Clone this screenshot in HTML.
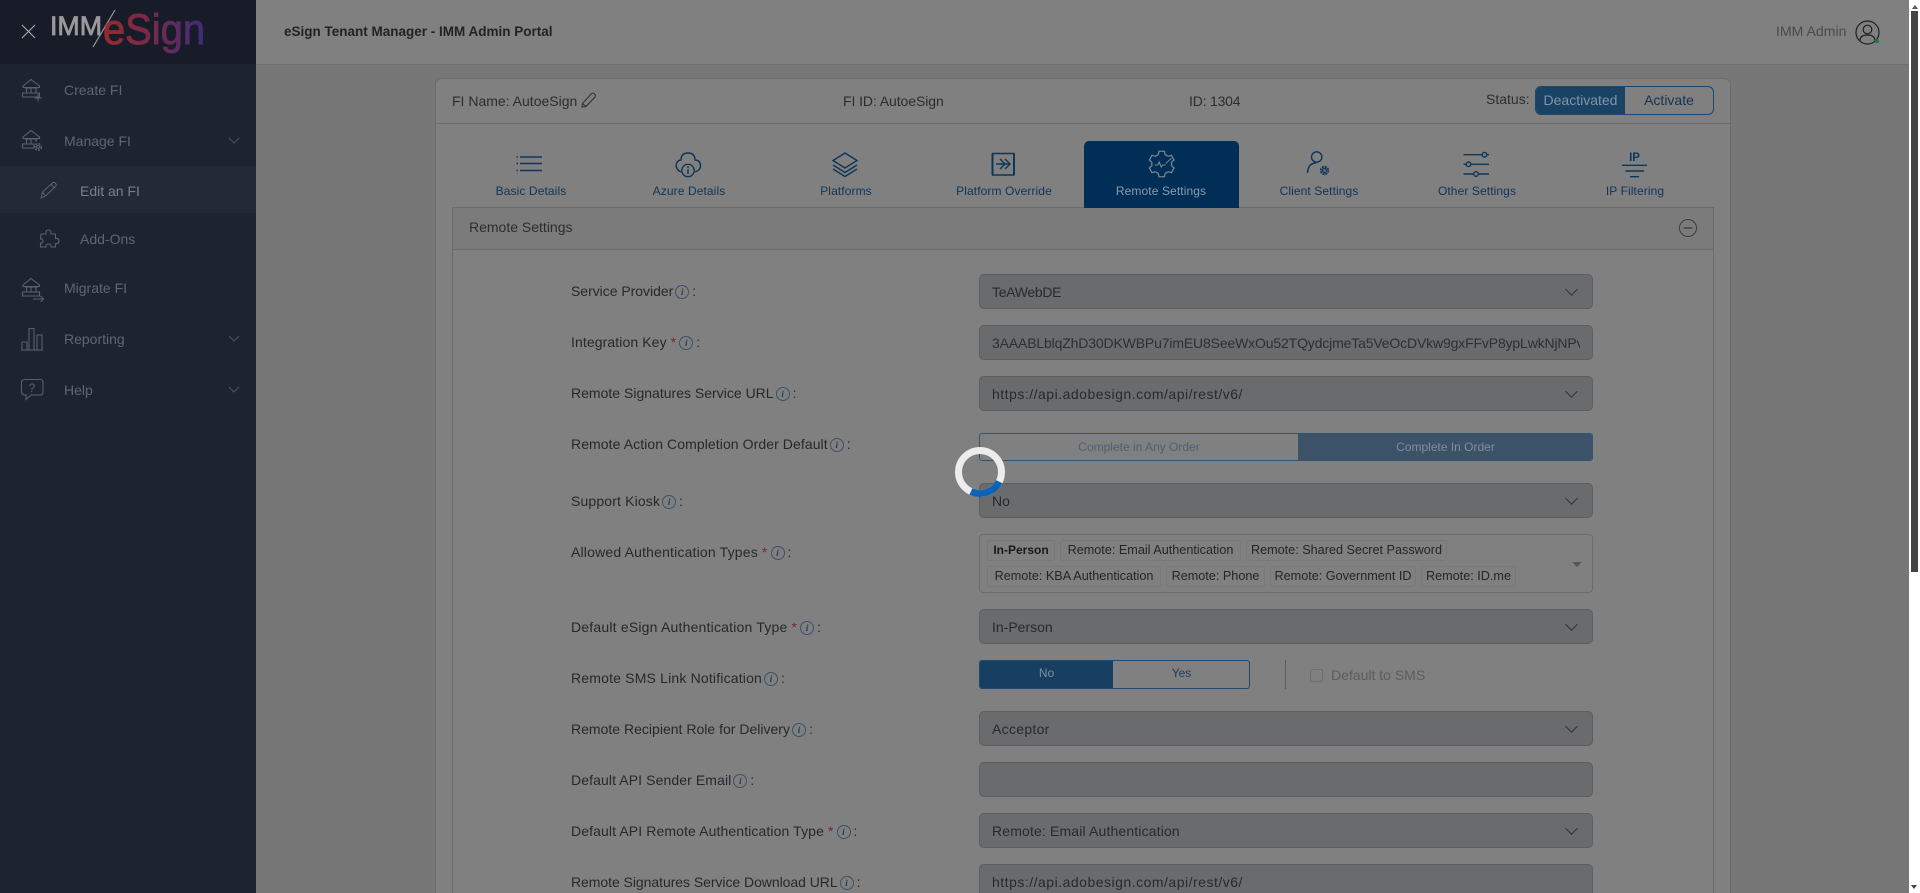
<!DOCTYPE html>
<html><head><meta charset="utf-8"><title>eSign Tenant Manager</title>
<style>
*{box-sizing:border-box}
html,body{margin:0;padding:0;width:1920px;height:893px;overflow:hidden;background:#777;font-family:"Liberation Sans",sans-serif;font-size:14px;color:#26282b}
#root{position:relative;width:1920px;height:893px;overflow:hidden}
.a{position:absolute;white-space:nowrap}
svg{position:absolute;overflow:visible}
.n{position:absolute;left:64px;color:#5f6670;line-height:20px;white-space:nowrap}
.l{position:absolute;left:571px;height:20px;line-height:20px;white-space:nowrap;color:#26282b}
.l b{color:#7a2a2a;font-weight:400;margin:0 1px 0 4px}
.inf{display:inline-block;width:14px;height:14px;border:1px solid #39526b;border-radius:50%;font:italic bold 9px/12px "Liberation Serif",serif;text-align:center;color:#26394d;margin:0 3px 0 2px;vertical-align:1px;letter-spacing:0}
.s{position:absolute;left:979px;width:614px;height:35px;background:#6a6b6d;border:1px solid #5b5e63;border-radius:5px;padding-left:12px;line-height:34px;color:#27292c;white-space:nowrap;overflow:hidden}
.c::after{content:"";position:absolute;right:16px;top:10px;width:8px;height:8px;border-right:1.300px solid #303338;border-bottom:1.300px solid #303338;transform:rotate(45deg)}
.t{position:absolute;top:183px;width:158px;text-align:center;font-size:12px;line-height:16px;color:#0e3456;letter-spacing:.1px}
.g{position:absolute;height:21px;border:1px solid #77787a;border-radius:3px;font-size:12.650px;line-height:18px;text-align:center;color:#232528;white-space:nowrap}
</style></head><body><div id="root">
<!-- sidebar -->
<div class="a" style="left:0;top:0;width:256px;height:893px;background:#1d2431"></div>
<div class="a" style="left:0;top:0;width:256px;height:64px;background:#171c28"></div>
<div class="a" style="left:0;top:166px;width:256px;height:47px;background:#232a36"></div>
<svg style="left:0;top:0" width="256" height="64">
<defs><linearGradient id="lg" gradientUnits="userSpaceOnUse" x1="103" y1="0" x2="205" y2="0"><stop offset="0" stop-color="#962a2e"/><stop offset=".5" stop-color="#74294e"/><stop offset="1" stop-color="#3e2d78"/></linearGradient></defs>
<path d="M22 25L35 38M35 25L22 38" stroke="#a8aaad" stroke-width="1.100" fill="none"/>
<text x="50" y="35" font-family="Liberation Sans" font-size="27" fill="#9a9a9a" stroke="#9a9a9a" stroke-width=".8" textLength="52" lengthAdjust="spacingAndGlyphs">IMM</text>
<path d="M115 10L93 47" stroke="#9a9a9a" stroke-width="1.200"/>
<text x="103" y="44" font-family="Liberation Sans" font-size="43" fill="url(#lg)" stroke="url(#lg)" stroke-width=".9" textLength="102" lengthAdjust="spacingAndGlyphs">eSign</text>
</svg>
<svg style="left:0;top:64px" width="256" height="350" fill="none" stroke="#5a616b" stroke-width="1.100">
<path d="M23 22L31 15.500L39.500 22V23.500H23ZM25 24H38M26.500 24V29M31 24V29M36 24V29M22.500 29H39.500V33H22.500Z"/><path d="M38 30V37.500M34.500 34H42"/>
<g transform="translate(0,51)"><path d="M23 22L31 15.500L39.500 22V23.500H23ZM25 24H38M26.500 24V29M31 24V29M36 24V27M22.500 29H34V33H22.500Z"/><circle cx="38" cy="32" r="1.500"/><circle cx="38" cy="32" r="3.300" stroke-dasharray="2 1.200" stroke-width="1.500"/></g>
<g transform="translate(0,199)"><path d="M23 22L31 15.500L39.500 22V23.500H23ZM25 24H38M26.500 24V29M31 24V29M36 24V29M22.500 29H39.500V33H22.500Z"/><path d="M33 36H43.500M40.500 33L43.500 36L40.500 39"/></g>
<path d="M21 286H43M22 285.500V278H27V285.500M29 285.500V264.500H34V285.500M37 285.500V271H42V285.500"/>
<path d="M25 315.500H40Q43 315.500 43 318.500V328Q43 331 40 331H31L26 335.500V331H25Q21.500 331 21.500 328V318.500Q21.500 315.500 25 315.500Z"/>
<text x="32" y="328" font-family="Liberation Sans" font-size="12" fill="#5a616b" stroke="none" text-anchor="middle">?</text>
<path d="M229 74L234 79L239 74M229 272L234 277L239 272M229 323L234 328L239 323" stroke="#4a515c"/>
<path d="M41 134L42.500 128L52.500 118.800Q54 117.800 55.500 119.300Q57 120.800 55.500 122.500L45.500 132ZM42.500 128L45.500 132M51 120.500L54 123.500" stroke="#5f666f" stroke-width=".9"/>
<path d="M41 170H46Q45.500 166 48.500 166Q51.500 166 51 170H55.500V174.500Q59 174 59 177Q59 180 55.500 179.500V183H51Q51.500 180 48.500 180Q45.500 180 46 183H40.500V179Q43 179.500 43 177Q43 174.500 40.500 175Z" stroke="#5a616b"/>
</svg>
<div class="n" style="top:80px">Create FI</div>
<div class="n" style="top:131px">Manage FI</div>
<div class="n" style="left:80px;top:181px;color:#7b8089">Edit an FI</div>
<div class="n" style="left:80px;top:229px">Add-Ons</div>
<div class="n" style="top:278px">Migrate FI</div>
<div class="n" style="top:329px">Reporting</div>
<div class="n" style="top:380px">Help</div>
<!-- header -->
<div class="a" style="left:256px;top:0;width:1653px;height:65px;background:#808080;border-bottom:1px solid #6f6f6f"></div>
<div class="a" style="left:284px;top:23px;font-weight:700;font-size:13.500px;line-height:18px;color:#1f2226">eSign Tenant Manager - IMM Admin Portal</div>
<div class="a" style="left:1776px;top:22px;line-height:18px;color:#474a4e;letter-spacing:.05px">IMM Admin</div>
<svg style="left:1855px;top:20px" width="25" height="25" fill="none" stroke="#1d1f22" stroke-width="1.200"><circle cx="12.500" cy="12.500" r="11.500"/><circle cx="12.500" cy="9.500" r="4.300"/><path d="M5 20.500C5 16 9 15 12.500 15C16 15 20 16 20 20.500"/><circle cx="22" cy="21" r="2.200" fill="#1f7a3c" stroke="none"/></svg>
<!-- scrollbar -->
<div class="a" style="left:1909px;top:0;width:11px;height:893px;background:#fff"></div>
<div class="a" style="left:1911px;top:11px;width:7px;height:561px;background:#444"></div>
<div class="a" style="left:1912px;top:5px;width:0;height:0;border:3.500px solid transparent;border-bottom:4px solid #555;border-top:0"></div>
<div class="a" style="left:1911px;top:885px;width:0;height:0;border:3.500px solid transparent;border-top:4px solid #444;border-bottom:0"></div>
<!-- card -->
<div class="a" style="left:435px;top:78px;width:1296px;height:830px;background:#808080;border:1px solid #6b6b6b;border-radius:6px"></div>
<div class="a" style="left:435px;top:123px;width:1296px;height:1px;background:#6b6b6b"></div>
<div class="a" style="left:452px;top:92px;line-height:18px;color:#2b2d30">FI Name: AutoeSign</div>
<svg style="left:581px;top:92px" width="16" height="16" fill="none" stroke="#2b2d30" stroke-width="1"><path d="M1.500 11.500L10.500 1.500Q12 .5 13.500 2Q15 3.500 14 5L5 14.500L1 15ZM1.500 11.500L5 14.500"/></svg>
<div class="a" style="left:843px;top:92px;line-height:18px;color:#2b2d30;letter-spacing:-.08px">FI ID: AutoeSign</div>
<div class="a" style="left:1189px;top:92px;line-height:18px;color:#2b2d30;letter-spacing:-.2px">ID: 1304</div>
<div class="a" style="left:1486px;top:90px;line-height:18px;color:#2b2d30">Status:</div>
<div class="a" style="left:1535px;top:86px;width:179px;height:29px;border:1px solid #1c466b;border-radius:6px;overflow:hidden">
<div class="a" style="left:0;top:0;width:89px;height:27px;background:#1a4265;color:#7f95a8;text-align:center;line-height:27px">Deactivated</div>
<div class="a" style="left:89px;top:0;width:88px;height:27px;color:#133350;text-align:center;line-height:27px">Activate</div></div>
<!-- tabs -->
<div class="a" style="left:1084px;top:141px;width:155px;height:66px;background:#002e56;border-radius:5px 5px 0 0"></div>
<svg style="left:0;top:0" width="1920" height="210" fill="none" stroke="#0f3558" stroke-width="1.400">
<path d="M520 157H542M520 163.500H542M520 170.500H542"/><path d="M516.500 157H518M516.500 163.500H518M516.500 170.500H518"/>
<path d="M681 172Q675 169 676.500 163.500Q678 160 681 160Q681 153 688 153Q695 153 695 160Q700 160 700.500 165Q701 170 695 172"/><circle cx="688" cy="170.500" r="6.200"/><path d="M688 169V174M688 166.500V168" stroke-width="1.500"/>
<path d="M845 153L857 160.500L845 168L833 160.500ZM833 165L845 172.500L857 165M833 169L845 176.500L857 169"/>
<path d="M992.500 153.500H1014V175H992.500Z"/><path d="M992.500 153.500V175M1014 153.500V175" stroke-width="2"/><path d="M996 164H1009M1000 159L1005 164L1000 169M1005 159L1010 164L1005 169"/>
<g transform="translate(1161.700,164)" stroke="#76838f" stroke-width="1.300"><path d="M-3.420 -9.400L-2.700 -12.720L2.700 -12.720L3.420 -9.400L6.430 -7.660"/><path transform="rotate(60)" d="M-3.420 -9.400L-2.700 -12.720L2.700 -12.720L3.420 -9.400L6.430 -7.660"/><path transform="rotate(120)" d="M-3.420 -9.400L-2.700 -12.720L2.700 -12.720L3.420 -9.400L6.430 -7.660"/><path transform="rotate(180)" d="M-3.420 -9.400L-2.700 -12.720L2.700 -12.720L3.420 -9.400L6.430 -7.660"/><path transform="rotate(240)" d="M-3.420 -9.400L-2.700 -12.720L2.700 -12.720L3.420 -9.400L6.430 -7.660"/><path transform="rotate(300)" d="M-3.420 -9.400L-2.700 -12.720L2.700 -12.720L3.420 -9.400L6.430 -7.660"/><path d="M-7 1H-4L-2.500 -2L-.5 3L1 1H4M4 -.5L10 -6" stroke-width="1.100"/></g>
<circle cx="1316.700" cy="157" r="5.200"/><path d="M1307.500 173C1308 166 1311 163 1316 163"/><circle cx="1324.500" cy="170.500" r="2"/><circle cx="1324.500" cy="170.500" r="3.800" stroke-dasharray="2 1" stroke-width="1.800"/>
<path d="M1463.500 154.700H1482M1487 154.700H1489M1463.500 164.300H1466M1471 164.300H1489M1463.500 174H1473.500M1479 174H1489"/><circle cx="1484.500" cy="154.700" r="2.300"/><circle cx="1468.500" cy="164.300" r="2.300"/><circle cx="1476" cy="174" r="2.300"/>
<text x="1634.500" y="161" font-family="Liberation Sans" font-weight="700" font-size="11.500" fill="#0f3558" stroke="none" text-anchor="middle">IP</text>
<path d="M1622 165.300H1647M1625.500 171H1644M1630 176.700H1639"/>
</svg>
<div class="t" style="left:452px">Basic Details</div>
<div class="t" style="left:610px">Azure Details</div>
<div class="t" style="left:767px">Platforms</div>
<div class="t" style="left:925px">Platform Override</div>
<div class="t" style="left:1082px;color:#8c9cac">Remote Settings</div>
<div class="t" style="left:1240px">Client Settings</div>
<div class="t" style="left:1398px">Other Settings</div>
<div class="t" style="left:1556px">IP Filtering</div>
<!-- panel -->
<div class="a" style="left:452px;top:207px;width:1262px;height:700px;background:#808080;border:1px solid #6b6b6b"></div>
<div class="a" style="left:1084px;top:205px;width:155px;height:3px;background:#002e56"></div>
<div class="a" style="left:453px;top:208px;width:1260px;height:42px;background:#7b7b7b;border-bottom:1px solid #6b6b6b"></div>
<div class="a" style="left:469px;top:218px;line-height:18px;color:#2b2d30">Remote Settings</div>
<svg style="left:1678px;top:218px" width="20" height="20" fill="none" stroke="#3b3e42" stroke-width="1"><circle cx="10" cy="10" r="8.500"/><path d="M5.500 10H14.500" stroke-width="1.400"/></svg>
<!-- labels -->
<div class="l" style="top:281px;letter-spacing:-.03px">Service Provider<i class="inf">i</i>:</div>
<div class="l" style="top:332px;letter-spacing:.1px">Integration Key<b>*</b><i class="inf">i</i>:</div>
<div class="l" style="top:383px;letter-spacing:.01px">Remote Signatures Service URL<i class="inf">i</i>:</div>
<div class="l" style="top:434px;letter-spacing:.08px">Remote Action Completion Order Default<i class="inf">i</i>:</div>
<div class="l" style="top:491px;letter-spacing:.15px">Support Kiosk<i class="inf">i</i>:</div>
<div class="l" style="top:542px;letter-spacing:.18px">Allowed Authentication Types<b>*</b><i class="inf">i</i>:</div>
<div class="l" style="top:617px;letter-spacing:.2px">Default eSign Authentication Type<b>*</b><i class="inf">i</i>:</div>
<div class="l" style="top:668px;letter-spacing:.18px">Remote SMS Link Notification<i class="inf">i</i>:</div>
<div class="l" style="top:719px;letter-spacing:.01px">Remote Recipient Role for Delivery<i class="inf">i</i>:</div>
<div class="l" style="top:770px;letter-spacing:.1px">Default API Sender Email<i class="inf">i</i>:</div>
<div class="l" style="top:821px;letter-spacing:.11px">Default API Remote Authentication Type<b>*</b><i class="inf">i</i>:</div>
<div class="l" style="top:872px;letter-spacing:-.05px">Remote Signatures Service Download URL<i class="inf">i</i>:</div>
<!-- fields -->
<div class="s c" style="top:274px;letter-spacing:-.3px">TeAWebDE</div>
<div class="s" style="top:325px"><span class="a" style="left:12px;top:0;width:588px;overflow:hidden;color:#2b2f36;letter-spacing:-.15px">3AAABLblqZhD30DKWBPu7imEU8SeeWxOu52TQydcjmeTa5VeOcDVkw9gxFFvP8ypLwkNjNPvXqT</span></div>
<div class="s c" style="top:376px;letter-spacing:.5px">https://api.adobesign.com/api/rest/v6/</div>
<div class="a" style="left:979px;top:433px;width:614px;height:28px;border:1px solid #33546f;border-radius:3px;overflow:hidden">
<div class="a" style="left:0;top:0;width:318px;height:26px;text-align:center;font-size:12px;line-height:26px;color:#4a6178">Complete in Any Order</div>
<div class="a" style="left:318px;top:0;width:295px;height:26px;background:#3b5268;text-align:center;font-size:12px;line-height:26px;color:#808e9c">Complete In Order</div></div>
<div class="s c" style="top:483px">No</div>
<div class="a" style="left:979px;top:534px;width:614px;height:59px;border:1px solid #6b6c6e;border-radius:4px"></div>
<div class="g" style="left:987px;top:540px;width:68px;font-weight:700;font-size:12px;color:#17191c">In-Person</div>
<div class="g" style="left:1060px;top:540px;width:181px">Remote: Email Authentication</div>
<div class="g" style="left:1246px;top:540px;width:201px">Remote: Shared Secret Password</div>
<div class="g" style="left:987px;top:566px;width:174px">Remote: KBA Authentication</div>
<div class="g" style="left:1166px;top:566px;width:99px">Remote: Phone</div>
<div class="g" style="left:1270px;top:566px;width:146px">Remote: Government ID</div>
<div class="g" style="left:1421px;top:566px;width:95px">Remote: ID.me</div>
<div class="a" style="left:1572px;top:562px;width:0;height:0;border:5px solid transparent;border-top:5px solid #54575c;border-bottom:0"></div>
<div class="s c" style="top:609px">In-Person</div>
<div class="a" style="left:979px;top:660px;width:271px;height:29px;border:1px solid #1c4a73;border-radius:3px;overflow:hidden">
<div class="a" style="left:0;top:0;width:133px;height:27px;background:#173f61;text-align:center;font-size:12px;line-height:25px;color:#7b8d9e">No</div>
<div class="a" style="left:134px;top:0;width:135px;height:27px;text-align:center;font-size:12px;line-height:25px;color:#1e3a55">Yes</div></div>
<div class="a" style="left:1285px;top:660px;width:1px;height:29px;background:#5a5c5f"></div>
<div class="a" style="left:1310px;top:669px;width:13px;height:13px;border:1px solid #6e6e6e;border-radius:2px"></div>
<div class="a" style="left:1331px;top:666px;line-height:18px;color:#5a5c5f">Default to SMS</div>
<div class="s c" style="top:711px;letter-spacing:.3px">Acceptor</div>
<div class="s" style="top:762px"></div>
<div class="s c" style="top:813px;letter-spacing:.15px">Remote: Email Authentication</div>
<div class="s" style="top:864px;letter-spacing:.5px">https://api.adobesign.com/api/rest/v6/</div>
<!-- spinner -->
<svg style="left:955px;top:447px" width="50" height="50" fill="none" stroke-width="7"><circle cx="25" cy="25" r="21.500" stroke="#ececec"/><path d="M44.200 34.700A21.500 21.500 0 0 1 15.900 44.500" stroke="#0d63b5"/></svg>
</div></body></html>
